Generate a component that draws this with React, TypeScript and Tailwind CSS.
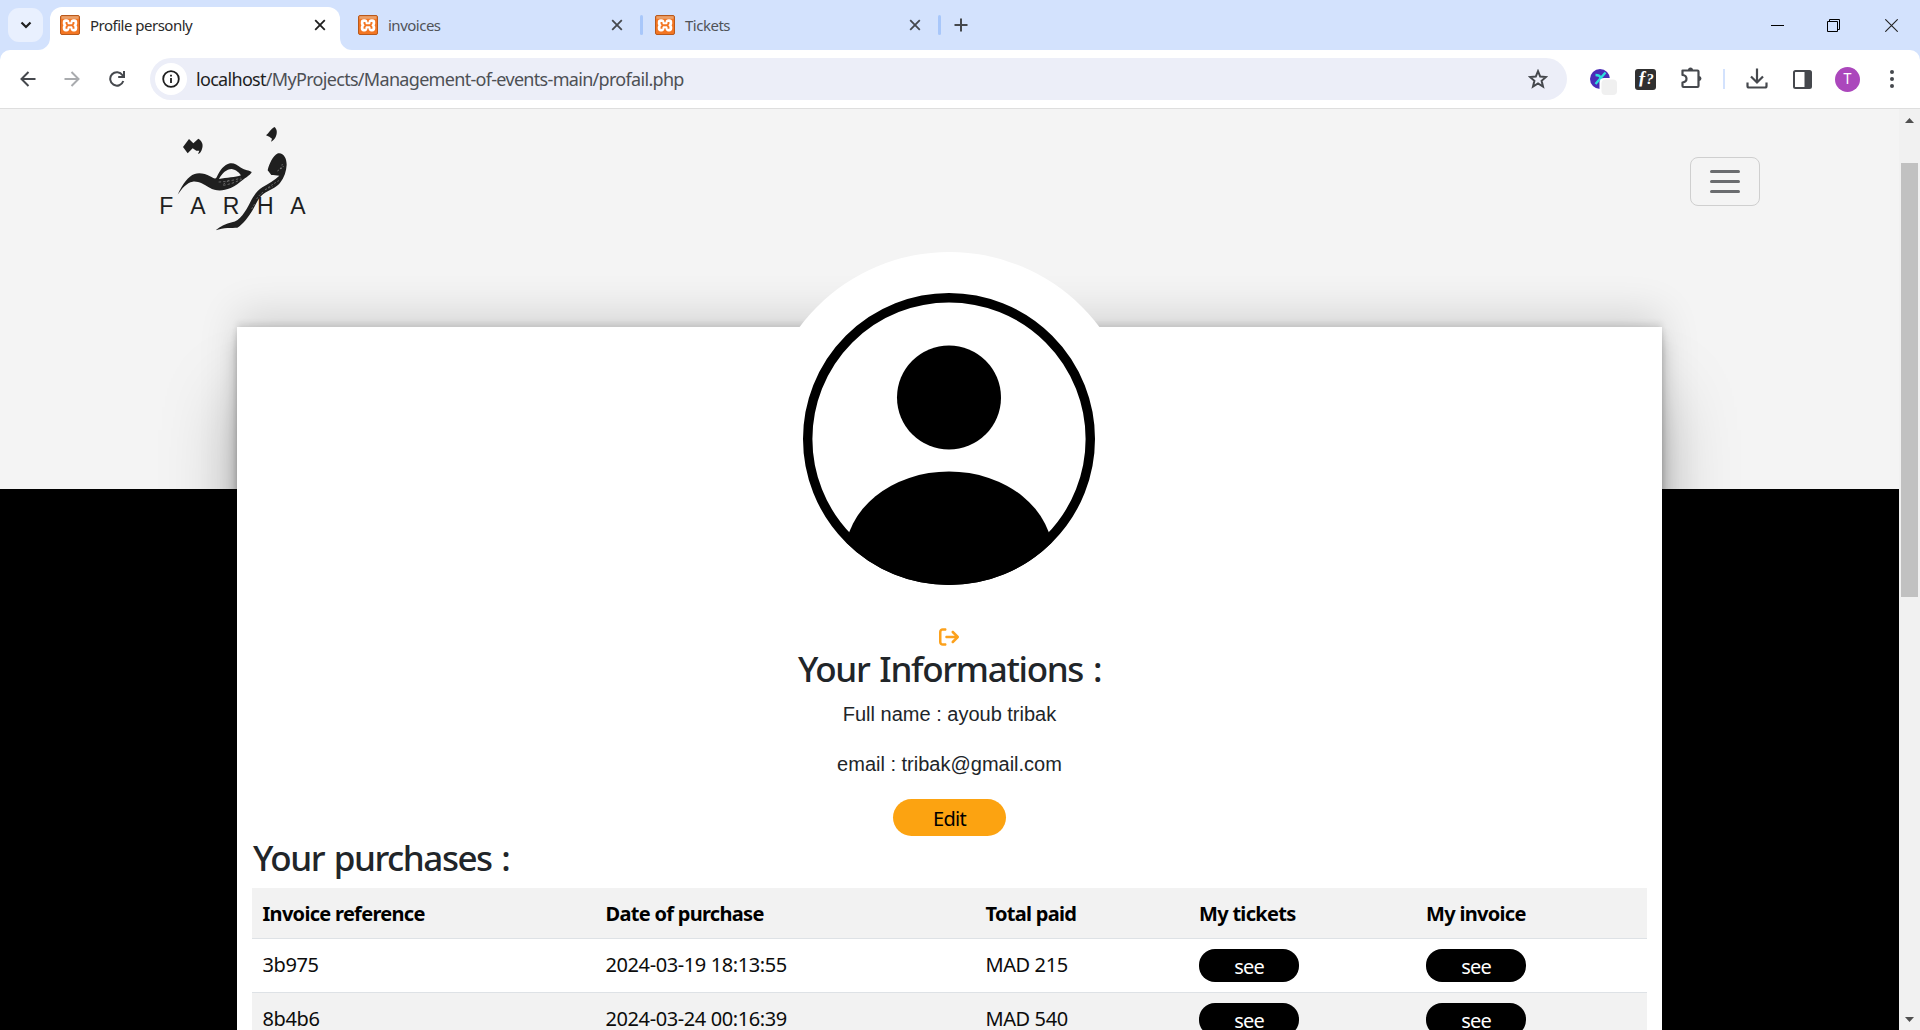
import { ReactNode } from "react";
import { FaArrowRightFromBracket } from "react-icons/fa6";

function Favicon() {
  return (
    <svg width="20" height="20" viewBox="0 0 20 20" className="shrink-0">
      <rect x="0.5" y="0.5" width="19" height="19" rx="1.5" fill="#f37623" stroke="#b8591c" />
      <rect x="1.5" y="1.2" width="17" height="2.6" fill="#e9a16c" />
      <g fill="#fff">
        <rect x="2.800" y="4.300" width="6.600" height="6.800" rx="2.800" />
        <rect x="10.600" y="4.300" width="6.600" height="6.800" rx="2.800" />
        <rect x="2.800" y="9.400" width="6.600" height="7" rx="2.800" />
        <rect x="10.600" y="9.400" width="6.600" height="7" rx="2.800" />
        <rect x="4" y="7.300" width="12" height="6" />
      </g>
      <path d="M6.500 7V8.500L7.700 10.300 6.500 12V13.700M13.500 7V8.500L12.300 10.300 13.500 12V13.700M7.500 10.300H12.500" fill="none" stroke="#f37623" strokeWidth="1.900" />
    </svg>
  );
}

function Cross({ color }: { color: string }) {
  return (
    <svg width="12" height="12" viewBox="0 0 12 12" className="shrink-0">
      <path d="M1.200 1.200 10.800 10.800M10.800 1.200 1.200 10.800" stroke={color} strokeWidth="1.800" />
    </svg>
  );
}

function TabBar() {
  return (
    <div className="flex h-[50px] items-center bg-[#d3e2fd] font-['Noto_Sans'] text-[15px] tracking-[-0.5px] text-[#505358]">
      <div className="ml-2 flex h-[34px] w-[35px] items-center justify-center rounded-[11px] bg-[#e9f0fe]">
        <svg width="12" height="8" viewBox="0 0 12 8">
          <path d="M1.500 1.500 6 6 10.500 1.500" fill="none" stroke="#1f1f1f" strokeWidth="2.200" />
        </svg>
      </div>
      <div className="relative ml-[7px] mt-[7px] flex h-[43px] w-[290px] items-center rounded-t-[12px] bg-white pb-[7px] pl-[10px] text-[#2a2a2a]">
        <Favicon />
        <span className="ml-[10px] flex-1 whitespace-nowrap">Profile personly</span>
        <span className="mr-[14px]">
          <Cross color="#1f1f1f" />
        </span>
        <svg width="12" height="12" viewBox="0 0 12 12" className="absolute -left-3 bottom-0">
          <path d="M12 0V12H0A12 12 0 0 0 12 0Z" fill="#fff" />
        </svg>
        <svg width="12" height="12" viewBox="0 0 12 12" className="absolute -right-3 bottom-0">
          <path d="M0 0V12H12A12 12 0 0 1 0 0Z" fill="#fff" />
        </svg>
      </div>
      <div className="ml-[18px] flex w-[265px] items-center">
        <Favicon />
        <span className="ml-[10px] flex-1">invoices</span>
        <Cross color="#45484d" />
      </div>
      <div className="ml-[17px] h-5 w-[3px] rounded bg-[#a8c7fa]" />
      <div className="ml-[12px] flex w-[266px] items-center">
        <Favicon />
        <span className="ml-[10px] flex-1">Tickets</span>
        <Cross color="#45484d" />
      </div>
      <div className="ml-[17px] h-5 w-[3px] rounded bg-[#a8c7fa]" />
      <svg width="14" height="14" viewBox="0 0 14 14" className="ml-[13px]">
        <path d="M7 .5V13.500M.5 7H13.500" stroke="#45484d" strokeWidth="2" />
      </svg>
      <div className="ml-auto mr-[22px] flex items-center">
        <svg width="13" height="13" viewBox="0 0 13 13" className="mr-[43px]">
          <path d="M0 6.500H13" stroke="#000" />
        </svg>
        <svg width="13" height="13" viewBox="0 0 13 13" className="mr-[45px]" fill="none" stroke="#000" strokeWidth="1">
          <path d="M.5 2.500H10.500V12.500H.5ZM2.500 2.500V.5H12.500V10.500H10.500" />
        </svg>
        <svg width="13" height="13" viewBox="0 0 13 13">
          <path d="M.3.3 12.700 12.700M12.700.3.3 12.700" stroke="#222" strokeWidth="1.100" />
        </svg>
      </div>
    </div>
  );
}

function Toolbar() {
  return (
    <div className="bg-[#d3e2fd]">
      <div className="flex h-[59px] items-center rounded-t-[10px] border-b border-[#dedede] bg-white text-[#4d5055]">
        <svg width="16" height="16" viewBox="0 0 16 16" className="ml-[20px]" fill="none" stroke="#45484d" strokeWidth="2">
          <path d="M15.500 8H2M8.500 1 1.500 8 8.500 15" />
        </svg>
        <svg width="16" height="16" viewBox="0 0 16 16" className="ml-[28px]" fill="none" stroke="#a9abae" strokeWidth="2">
          <path d="M.5 8H14M7.500 1 14.500 8 7.500 15" />
        </svg>
        <svg width="16" height="16" viewBox="0 0 16 16" className="ml-[29px]" fill="none" stroke="#45484d" strokeWidth="2">
          <path d="M14.300 10A6.700 6.700 0 1 1 13.500 4.200L14.500 5.500" />
          <path d="M15 0V6H9.200" />
        </svg>
        <div className="ml-[25px] flex h-[42px] w-[1417px] items-center rounded-full bg-[#eceef8]">
          <div className="ml-[5px] flex size-8 items-center justify-center rounded-full bg-white">
            <svg width="18" height="18" viewBox="0 0 18 18" fill="none" stroke="#1f1f1f" strokeWidth="1.800">
              <circle cx="9" cy="9" r="7.800" />
              <path d="M9 8V13M9 4.700V6.500" />
            </svg>
          </div>
          <span className="ml-[9px] flex-1 whitespace-nowrap font-['Noto_Sans'] text-[18px] tracking-[-0.69px]">
            <span className="text-[#1f1f1f]">localhost</span>/MyProjects/Management-of-events-main/profail.php
          </span>
          <svg width="20" height="20" viewBox="0 0 20 20" className="mr-[19px]" fill="none" stroke="#45484d" strokeWidth="2">
            <path d="M10 2.200 12.200 7.600 18 8 13.600 11.800 15 17.500 10 14.400 5 17.500 6.400 11.800 2 8 7.800 7.600Z" />
          </svg>
        </div>
        <svg width="28" height="30" viewBox="0 0 28 30" className="ml-[23px] mt-[5px]">
          <circle cx="10" cy="12" r="10" fill="#4a2cb8" />
          <path d="M5.500 8Q10 8 10.500 11T16 15.500M15.500 5.500 5.500 17" fill="none" stroke="#2be0dc" strokeWidth="2.400" />
          <rect x="9.500" y="11" width="18" height="18" rx="4.500" fill="#fff" />
          <rect x="11.500" y="12.500" width="15.500" height="15.500" rx="4" fill="#f0f0f0" />
        </svg>
        <div className="ml-[17px] flex h-[21px] w-[21px] items-center justify-center rounded-[3px] bg-[#303030] font-['Liberation_Serif'] text-[18px] font-bold italic leading-none text-white">
          <span className="-mt-[2px] tracking-[-0.500px]">
            ƒ<span className="text-[15px]">?</span>
          </span>
        </div>
        <svg width="22" height="22" viewBox="0 0 22 22" className="-mt-[2px] ml-[25px]" fill="none" stroke="#45484d" strokeWidth="2.200" strokeLinejoin="round">
          <path d="M1.500 3.500H16.500A1 1 0 0 1 17.500 4.500V19A1 1 0 0 1 16.500 20H2.500A1 1 0 0 1 1.500 19V15.500Q5.500 15 5.500 11.750T1.500 8Z" />
          <path d="M7 3A2.500 2.500 0 0 1 12 3ZM18 9A2.500 2.500 0 0 1 18 14Z" fill="#45484d" stroke="none" />
        </svg>
        <div className="ml-[20px] h-5 w-[2px] bg-[#d3e2fd]" />
        <svg width="22" height="21" viewBox="0 0 22 21" className="-mt-[1px] ml-[21px]" fill="none" stroke="#45484d" strokeWidth="2.200">
          <path d="M11 .5V14M5 8.500 11 14.500 17 8.500M1.500 14.500V18A1.500 1.500 0 0 0 3 19.500H19A1.500 1.500 0 0 0 20.500 18V14.500" />
        </svg>
        <svg width="19" height="19" viewBox="0 0 19 19" className="ml-[25px]">
          <rect x="1" y="1" width="17" height="17" rx="1.500" fill="none" stroke="#45484d" strokeWidth="2" />
          <path d="M11.500 1H18V18H11.500Z" fill="#45484d" />
        </svg>
        <div className="ml-[23px] flex size-[25px] items-center justify-center rounded-full bg-[#ab47bc] font-[Roboto] text-[14px] text-white">T</div>
        <svg width="4" height="18" viewBox="0 0 4 18" className="ml-[30px]" fill="#45484d">
          <circle cx="2" cy="2" r="2" />
          <circle cx="2" cy="9" r="2" />
          <circle cx="2" cy="16" r="2" />
        </svg>
      </div>
    </div>
  );
}

function Logo() {
  return (
    <svg width="180" height="130" viewBox="0 0 540 390" fill="#1f1f1f">
      <path d="M113 254C128 222 144 199 164 192 178 187 196 191 210 199 220 204 226 209 230 202 240 181 252 164 270 160 282 158 291 165 303 173 314 180 329 181 335 186 333 193 321 200 311 208 297 219 287 228 272 234 246 245 226 243 209 233 189 222 176 213 158 215 140 218 126 235 113 254Z" />
      <path d="M237 207C247 189 259 178 275 177 290 179 298 190 303 196 287 202 259 203 237 207Z" fill="#f4f4f4" />
      <path d="M236 216Q274 214 302 204M250 226Q280 221 306 207M266 211 247 225" fill="none" stroke="#c9c9c9" strokeWidth="1.300" strokeDasharray="7 6" />
      <path d="M129 111 147 87 160 100 175 86C185 92 190 102 187 113 185 124 179 131 174 132L178 122 169 122 158 115 143 130Z" />
      <path d="M378 76C386 70 393 56 403 51 412 57 412 70 407 81 403 89 398 93 393 95L396 86 388 80Z" />
      <path d="M383 181C388 162 397 139 414 130 430 127 440 144 440 164 439 183 433 202 420 219 408 234 385 240 369 253 353 266 349 282 338 300 326 320 310 342 292 353 276 354 251 352 227 361 241 350 258 340 276 337 300 333 317 303 330 278 340 258 350 243 367 232 384 222 404 211 418 197 408 196 402 196 394 195 385 192 383 181Z" />
      <path d="M412 183Q424 177 427 162M420 176Q428 177 430 168M384 233Q405 218 420 210M375 239Q390 232 398 230M350 267Q358 254 370 246M335 297 345 280" fill="none" stroke="#c9c9c9" strokeWidth="1.300" strokeDasharray="6 5" />
      <g fontFamily="Liberation Sans" fontSize="69">
        <text x="58" y="311">F</text>
        <text x="151" y="311">A</text>
        <text x="248" y="311">R</text>
        <text x="351" y="311">H</text>
        <text x="451" y="311">A</text>
      </g>
    </svg>
  );
}

function Avatar() {
  return (
    <div className="flex size-[375px] shrink-0 items-center justify-center rounded-full bg-white pb-px pr-px">
      <svg width="292" height="292" viewBox="0 0 292 292">
        <clipPath id="ring">
          <circle cx="146" cy="146" r="146" />
        </clipPath>
        <circle cx="146" cy="146" r="141.300" fill="none" stroke="#000" strokeWidth="9.400" />
        <circle cx="146" cy="104.500" r="52" />
        <ellipse cx="146" cy="263" rx="104" ry="84.500" clipPath="url(#ring)" />
      </svg>
    </div>
  );
}

function SeePill() {
  return (
    <div className="flex h-[33px] w-[100px] items-center justify-center rounded-[16px] bg-black pt-[3px] tracking-[-0.8px] text-white">see</div>
  );
}

const cols = "grid grid-cols-[343px_380px_213.5px_227px_1fr] pl-[10.5px]";

function Row({ id, date, total, striped }: { id: string; date: string; total: string; striped?: boolean }) {
  const text = "-mt-[2px] text-[#0c0c0c] tracking-[-0.400px]";
  return (
    <div className={`${cols} h-[54px] items-center border-b border-[#dee2e6] ${striped ? "bg-[#f2f2f2]" : "bg-white"}`}>
      <span className={text}>{id}</span>
      <span className={text}>{date}</span>
      <span className={text}>{total}</span>
      <SeePill />
      <SeePill />
    </div>
  );
}

function Head({ children }: { children: ReactNode }) {
  return <span className="pt-[2px] font-bold tracking-[-0.7px]">{children}</span>;
}

function Scrollbar() {
  return (
    <div className="flex w-[21px] flex-col items-center bg-[#f1f1f1]">
      <svg width="9" height="5" viewBox="0 0 9 5" className="mt-[9px]">
        <path d="M0 5 4.500 0 9 5Z" fill="#505050" />
      </svg>
      <div className="mt-[40px] h-[434px] w-[17px] bg-[#c1c1c1]" />
      <svg width="9" height="5" viewBox="0 0 9 5" className="mb-[8px] mt-auto">
        <path d="M0 0 4.500 5 9 0Z" fill="#505050" />
      </svg>
    </div>
  );
}

export default function App() {
  return (
    <div className="flex h-[1030px] w-[1920px] flex-col overflow-hidden">
      <TabBar />
      <Toolbar />
      <div className="flex min-h-0 flex-1">
        <div className="h-[921px] w-[1899px] overflow-hidden bg-black font-['Noto_Sans'] text-[20px] text-black">
          <header className="flex h-[380px] justify-between bg-[#f4f4f4] pl-[140px] pr-[139px] pt-px">
            <Logo />
            <button className="mt-[47px] flex h-[49px] w-[70px] flex-col items-center justify-center gap-[7px] rounded-[8px] border border-[#cfcfcf]">
              <span className="h-[3px] w-[30px] rounded bg-[#6a6c6f]" />
              <span className="h-[3px] w-[30px] rounded bg-[#6a6c6f]" />
              <span className="h-[3px] w-[30px] rounded bg-[#6a6c6f]" />
            </button>
          </header>
          <main className="relative mx-[237px] -mt-[162px] flex h-[900px] flex-col items-center bg-white px-[15px] shadow-[0_67.5px_69px_rgba(0,0,0,0.25),0_-15px_37.5px_rgba(0,0,0,0.12),0_5px_7.5px_rgba(0,0,0,0.12),0_15px_16px_rgba(0,0,0,0.17),0_-4px_6px_rgba(0,0,0,0.09)]">
            <div className="-mt-[75px] h-[375px]">
              <Avatar />
            </div>
            <FaArrowRightFromBracket className="mr-px size-5 text-[#fca11c]" />
            <h2 className="h-[44px] whitespace-nowrap text-[35px] font-medium leading-[44px] tracking-[-1.3px] text-[#212529] [word-spacing:2px]">Your Informations :</h2>
            <p className="mt-[8px] h-[30px] font-['Liberation_Sans'] leading-[30px] text-[#212529]">Full name : ayoub tribak</p>
            <p className="mt-[20px] h-[30px] font-['Liberation_Sans'] leading-[30px] text-[#212529]">email : tribak@gmail.com</p>
            <button className="mt-[20px] flex h-[37px] w-[113px] items-center justify-center rounded-full bg-[#fca311] pt-[2px] tracking-[-0.7px]">Edit</button>
            <h2 className="h-[52px] self-start whitespace-nowrap pl-px text-[35px] font-medium leading-[44px] tracking-[-1.45px] text-[#212529] [word-spacing:2px]">Your purchases :</h2>
            <div className="w-full">
              <div className={`${cols} h-[51px] items-center border-b border-[#dee2e6] bg-[#f2f2f2]`}>
                <Head>Invoice reference</Head>
                <Head>Date of purchase</Head>
                <Head>Total paid</Head>
                <Head>My tickets</Head>
                <Head>My invoice</Head>
              </div>
              <Row id="3b975" date="2024-03-19 18:13:55" total="MAD 215" />
              <Row id="8b4b6" date="2024-03-24 00:16:39" total="MAD 540" striped />
            </div>
          </main>
        </div>
        <Scrollbar />
      </div>
    </div>
  );
}
